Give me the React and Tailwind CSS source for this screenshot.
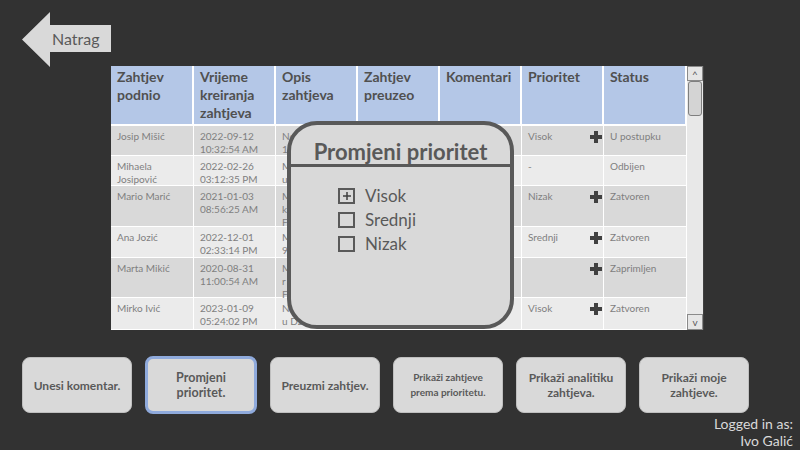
import React from 'react'

const font = { fontFamily: 'Lato, "Open Sans", sans-serif' }

const columns = ['Zahtjev podnio', 'Vrijeme kreiranja zahtjeva', 'Opis zahtjeva', 'Zahtjev preuzeo', 'Komentari', 'Prioritet', 'Status']
const colWidths = ['w-[83px]', 'w-[82px]', 'w-[82px]', 'w-[82px]', 'w-[82px]', 'w-[82px]', 'w-[83px]']

const rows = [
  { h: 'h-[30px]', bg: 'bg-[#d9d9d9]', user: 'Josip Mišić', time: ['2022-09-12', '10:32:54 AM'], opis: ['Ne', '1'], prio: 'Visok', plus: true, status: 'U postupku' },
  { h: 'h-[30px]', bg: 'bg-[#ebebeb]', user: 'Mihaela Josipović', time: ['2022-02-26', '03:12:35 PM'], opis: ['M', 'u'], prio: '-', plus: false, status: 'Odbijen' },
  { h: 'h-[41px]', bg: 'bg-[#d9d9d9]', user: 'Mario Marić', time: ['2021-01-03', '08:56:25 AM'], opis: ['M', 'k', 'F'], prio: 'Nizak', plus: true, status: 'Zatvoren' },
  { h: 'h-[31px]', bg: 'bg-[#ebebeb]', user: 'Ana Jozić', time: ['2022-12-01', '02:33:14 PM'], opis: ['M', '9'], prio: 'Srednji', plus: true, status: 'Zatvoren' },
  { h: 'h-[40px]', bg: 'bg-[#d9d9d9]', user: 'Marta Mikić', time: ['2020-08-31', '11:00:54 AM'], opis: ['M', 'r', 'F'], prio: '', plus: true, status: 'Zaprimljen' },
  { h: 'h-[32px]', bg: 'bg-[#ebebeb]', user: 'Mirko Ivić', time: ['2023-01-09', '05:24:02 PM'], opis: ['Ne', 'u Dž'], prio: 'Visok', plus: true, status: 'Zatvoren' },
]

function Plus() {
  return (
    <svg width="12" height="12" viewBox="0 0 12 12">
      <path d="M4 0h4v4h4v4h-4v4h-4v-4h-4v-4h4z" fill="#404040" />
    </svg>
  )
}

function BackArrow() {
  return (
    <div className="relative w-[90px] h-[55px]">
      <svg className="absolute inset-0" width="90" height="55" viewBox="0 0 90 55">
        <polygon points="0,27.5 28,0 28,13 89,13 89,40 28,40 28,55" fill="#d9d9d9" />
      </svg>
      <span className="absolute left-[30px] top-[17px] text-[16px] leading-[20px] text-[#595959]">Natrag</span>
    </div>
  )
}

function Cell({ w, children, className = '' }) {
  return (
    <div className={`${w} shrink-0 border-r border-white px-[6px] pt-[4px] text-[10px] leading-[13px] text-[#7f7f7f] ${className}`}>
      {children}
    </div>
  )
}

function Table() {
  return (
    <div className="flex w-[593px] h-[264px] ml-[111px] overflow-hidden">
      <div className="flex flex-col w-[576px]">
        <div className="flex h-[60px] bg-[#b4c7e7] border-b-2 border-white">
          {columns.map((c, i) => (
            <div key={c} className={`${colWidths[i]} shrink-0 border-r-2 border-white px-[6px] pt-[2px] text-[14px] leading-[18px] font-bold text-[#505050]`}>
              {c.split(' ').map(w => <div key={w}>{w}</div>)}
            </div>
          ))}
        </div>
        {rows.map((r, i) => (
          <div key={i} className={`flex ${r.h} ${r.bg} border-b border-white`}>
            <Cell w={colWidths[0]}>{r.user}</Cell>
            <Cell w={colWidths[1]}>{r.time.map(t => <div key={t}>{t}</div>)}</Cell>
            <Cell w={colWidths[2]}>{r.opis.map((t, j) => <div key={j}>{t}</div>)}</Cell>
            <Cell w={colWidths[3]} />
            <Cell w={colWidths[4]} />
            <Cell w={colWidths[5]} className="flex justify-between pr-[1px]">
              <span>{r.prio}</span>
              {r.plus && <span className="pt-[1px]"><Plus /></span>}
            </Cell>
            <Cell w={colWidths[6]}>{r.status}</Cell>
          </div>
        ))}
      </div>
      <div className="flex flex-col w-[17px] bg-[#e8e8e8] border-r border-[#404040]">
        <div className="h-[15px] border border-[#8a8a8a] bg-[#e6e6e6] flex items-center justify-center text-[10px] leading-none text-[#595959]">^</div>
        <div className="h-[35px] mx-[1px] rounded-[3px] border border-[#7f7f7f] bg-[#d4d4d4]" />
        <div className="flex-1" />
        <div className="h-[16px] border border-[#8a8a8a] bg-[#e6e6e6] flex items-center justify-center text-[10px] leading-none text-[#595959]">v</div>
      </div>
    </div>
  )
}

function Checkbox({ checked }) {
  return (
    <div className="w-[17px] h-[16px] border-2 border-[#595959] flex items-center justify-center">
      {checked && (
        <svg width="8" height="8" viewBox="0 0 8 8">
          <path d="M4 0v8M0 4h8" stroke="#404040" strokeWidth="1.5" />
        </svg>
      )}
    </div>
  )
}

function PriorityModal() {
  return (
    <div className="absolute left-[287px] top-[121px] w-[227px] h-[208px] rounded-[30px] border-4 border-[#595959] bg-[#d9d9d9] flex flex-col">
      <div className="h-[42px] border-b-[3px] border-[#595959] flex items-end justify-center">
        <span className="text-[22px] leading-[24px] font-bold text-[#595959]">Promjeni prioritet</span>
      </div>
      <div className="flex flex-col gap-[7px] pl-[47px] pt-[20px]">
        {['Visok', 'Srednji', 'Nizak'].map((p, i) => (
          <div key={p} className="flex items-center gap-[10px] h-[17px]">
            <Checkbox checked={i === 0} />
            <span className="text-[17px] leading-[17px] text-[#595959]">{p}</span>
          </div>
        ))}
      </div>
    </div>
  )
}

const buttons = [
  { label: ['Unesi komentar.'], size: 'text-[12px]' },
  { label: ['Promjeni', 'prioritet.'], size: 'text-[12.5px]', active: true },
  { label: ['Preuzmi zahtjev.'], size: 'text-[12px]' },
  { label: ['Prikaži zahtjeve', 'prema prioritetu.'], size: 'text-[10px]' },
  { label: ['Prikaži analitiku', 'zahtjeva.'], size: 'text-[12px]' },
  { label: ['Prikaži moje', 'zahtjeve.'], size: 'text-[12px]' },
]

export default function App() {
  return (
    <div className="relative w-[800px] h-[450px] bg-[#323232] overflow-hidden flex flex-col" style={font}>
      <div className="ml-[22px] mt-[12px] h-[54px]">
        <BackArrow />
      </div>
      <Table />
      <PriorityModal />
      <div className="flex gap-[13px] ml-[22px] mt-[26px] items-center">
        {buttons.map((b, i) => (
          <div
            key={i}
            className={`flex flex-col items-center justify-center rounded-[8px] bg-[#d9d9d9] font-bold text-[#595959] ${b.size} leading-[15px] ${
              b.active ? 'w-[112px] h-[58px] border-[3px] border-[#8faadc]' : 'w-[110px] h-[56px] border border-[#bfbfbf]'
            }`}
          >
            {b.label.map(l => <div key={l}>{l}</div>)}
          </div>
        ))}
      </div>
      <div className="flex flex-col items-end pr-[7px] mt-[1px] text-[14px] leading-[17px] text-[#d9d9d9]">
        <div>Logged in as:</div>
        <div>Ivo Galić</div>
      </div>
    </div>
  )
}
